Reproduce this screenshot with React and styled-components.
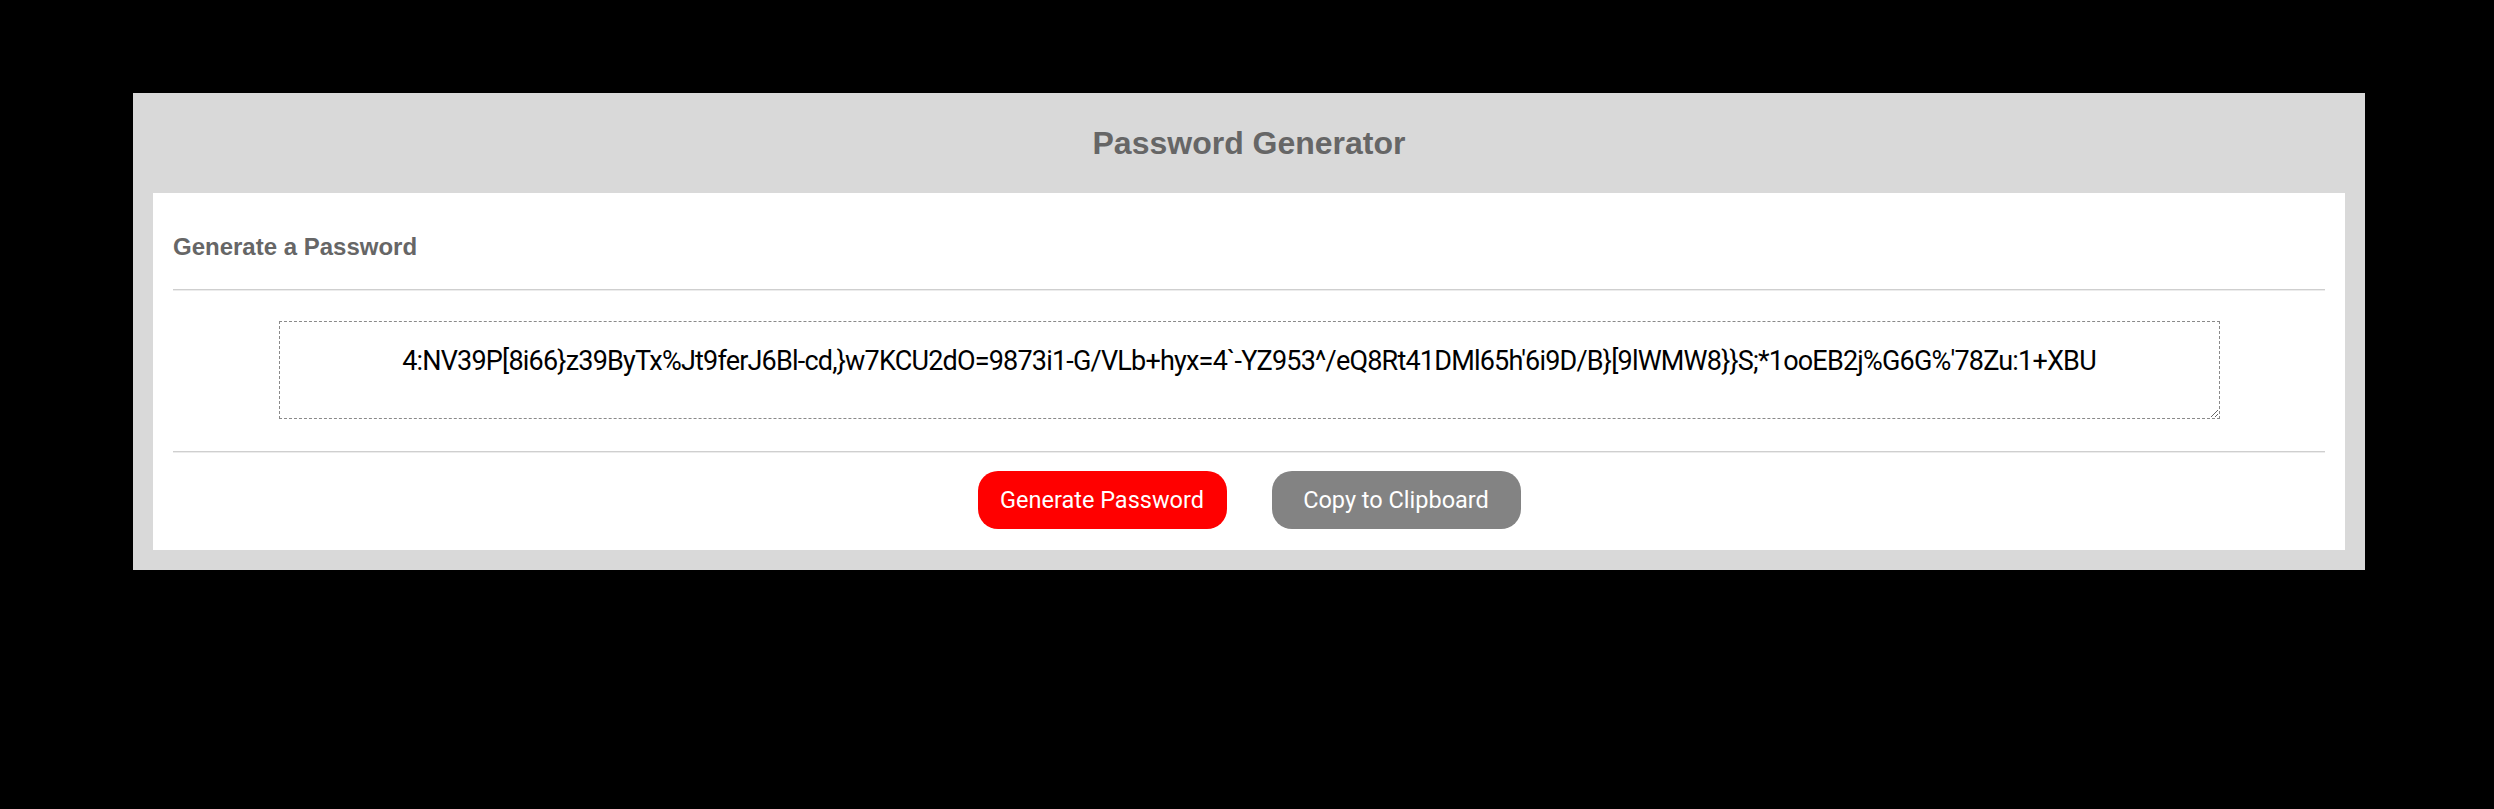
import React from 'react';
import styled, { createGlobalStyle } from 'styled-components';

const GlobalStyle = createGlobalStyle`
  html, body {
    margin: 0;
    padding: 0;
    background: #000;
  }
  body {
    font-family: "Liberation Sans", Arial, sans-serif;
  }
`;

const Page = styled.div`
  padding: 93px 129px 0 133px;
`;

const Card = styled.div`
  background: #d9d9d9;
  padding: 0 20px 20px;
`;

const Header = styled.div`
  height: 100px;
  display: flex;
  align-items: center;
  justify-content: center;
`;

const Title = styled.h1`
  margin: 0;
  font-size: 32px;
  font-weight: 700;
  color: #666;
`;

const Panel = styled.div`
  background: #fff;
  padding: 40px 20px 21px;
`;

const PanelTitle = styled.h2`
  margin: 0 0 28px;
  font-size: 24px;
  font-weight: 700;
  color: #666;
`;

const Divider = styled.hr`
  margin: 0;
  border: none;
  border-top: 1px solid #cfcfcf;
  border-bottom: 1px solid #ececec;
`;

const Output = styled.div`
  padding: 30px 0 32px;
`;

const PasswordBox = styled.textarea`
  display: block;
  box-sizing: border-box;
  width: 1941px;
  height: 98px;
  margin: 0 auto;
  padding: 23px 20px;
  border: 1px dashed #8a8a8a;
  background: #fff;
  color: #000;
  text-align: center;
  font-family: Roboto, "Liberation Sans", sans-serif;
  font-size: 27px;
  letter-spacing: -0.8px;
  outline: none;
`;

const Actions = styled.div`
  display: flex;
  justify-content: center;
  gap: 45px;
  padding-top: 18px;
`;

const Button = styled.button`
  width: 249px;
  height: 58px;
  border: none;
  border-radius: 20px;
  background: ${p => (p.$variant === 'primary' ? '#ff0000' : '#838383')};
  color: #fff;
  font-family: Roboto, "Liberation Sans", sans-serif;
  font-size: 23.5px;
  cursor: pointer;
`;

const password =
  "4:NV39P[8i66}z39ByTx%Jt9ferJ6Bl-cd,}w7KCU2dO=9873i1-G/VLb+hyx=4`-YZ953^/eQ8Rt41DMl65h'6i9D/B}[9lWMW8}}S;*1ooEB2j%G6G%'78Zu:1+XBU";

const App = () => {
  return (
    <>
      <GlobalStyle />
      <Page>
        <Card>
          <Header>
            <Title>Password Generator</Title>
          </Header>
          <Panel>
            <PanelTitle>Generate a Password</PanelTitle>
            <Divider />
            <Output>
              <PasswordBox readOnly value={password} />
            </Output>
            <Divider />
            <Actions>
              <Button $variant="primary">Generate Password</Button>
              <Button>Copy to Clipboard</Button>
            </Actions>
          </Panel>
        </Card>
      </Page>
    </>
  );
};

export default App;
